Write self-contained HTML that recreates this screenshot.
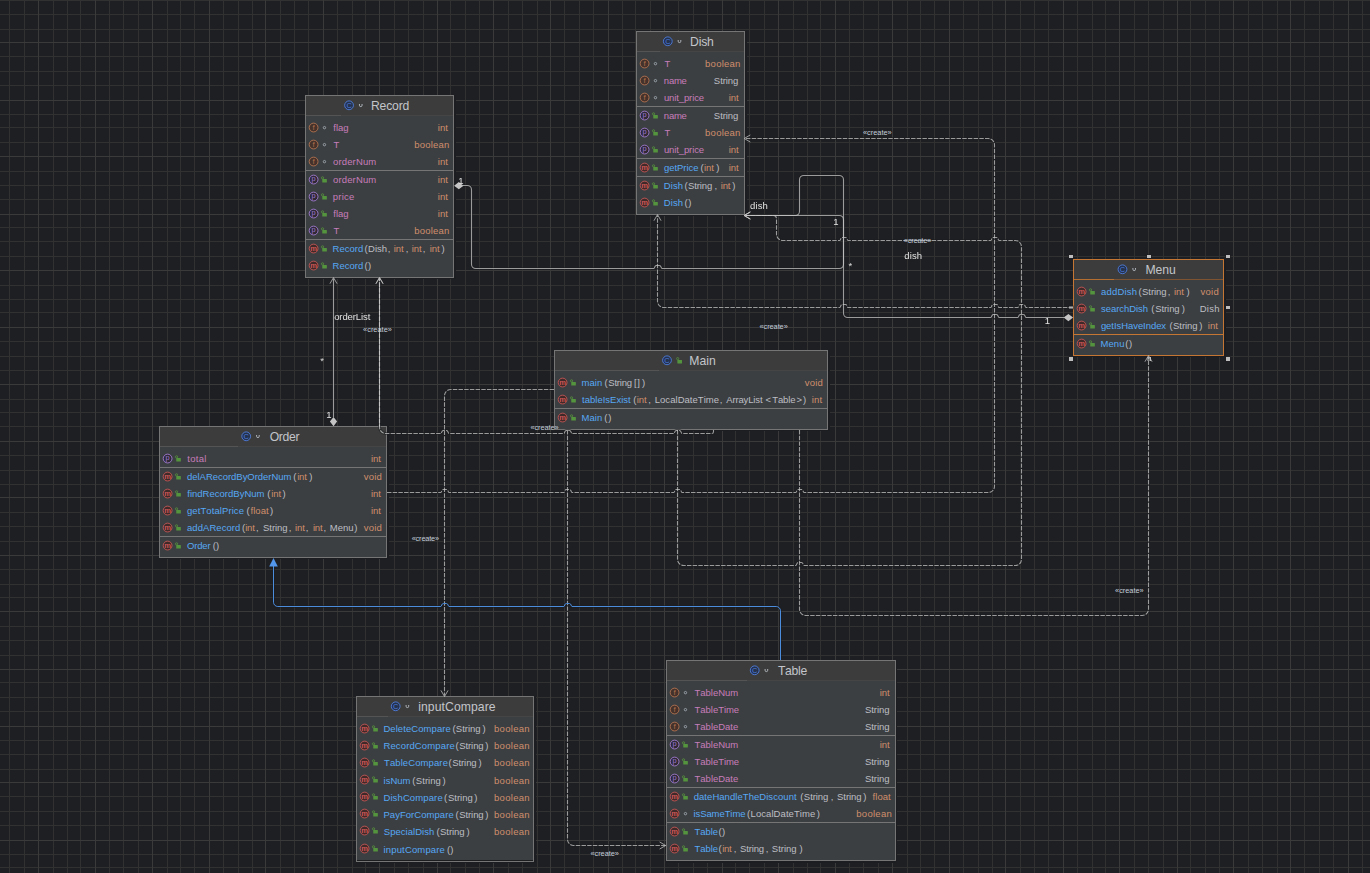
<!DOCTYPE html>
<html lang="en"><head><meta charset="utf-8"><title>UML class diagram</title>
<style>
html,body{margin:0;padding:0;background:#1e1f22}
body{width:1370px;height:873px;position:relative;overflow:hidden;font-family:"Liberation Sans",sans-serif;font-kerning:none}
svg{position:absolute;left:0;top:0;overflow:visible}
svg text{font-family:"Liberation Sans",sans-serif}
.bx{position:absolute;box-sizing:border-box;border:1px solid #757575;background:#3c3f41;box-shadow:2px 2px 0 0 #1c1d20}
.bx.sel{border-color:#c57633}
.bx i{position:absolute;left:0;right:0;display:block}
.hd{top:0;background:#3c3c3c}
.hs{height:1px;background:#454545}
.bx .hl{height:1px;right:auto;background:#545454}
.sel .hs{background:#7d5332}
.bx.sel .hl{background:#b36e30}
.sp{height:1px;background:#757575}
.hn{position:absolute;display:block;width:4px;height:3.8px;background:#bebebe;box-shadow:0 0 0 .5px #1e1f22}
span{position:absolute;white-space:pre;display:block}
.t{font-size:9.5px;line-height:12px}
.tt{font-size:12.2px;line-height:16px;color:#c3c5ca}
.lb{font-size:9.5px;line-height:12px;color:#e2e2e2}
.gl{position:absolute;left:0;top:0;width:1370px;height:873px;will-change:transform}
.cr{font-size:7.4px;line-height:10px;color:#c4cedb}
.p{color:#c77dbb}.b{color:#56a8f5}.o{color:#cf8e6d}.g{color:#bcbec4}
</style></head><body>
<svg width="1370" height="873" viewBox="0 0 1370 873" stroke-width="1" fill="none" shape-rendering="crispEdges"><path d="M9.5 0V873M24.5 0V873M53.5 0V873M67.5 0V873M80.5 0V873M109.5 0V873M123.5 0V873M138.5 0V873M167.5 0V873M180.5 0V873M194.5 0V873M223.5 0V873M238.5 0V873M252.5 0V873M280.5 0V873M294.5 0V873M308.5 0V873M337.5 0V873M352.5 0V873M365.5 0V873M394.5 0V873M408.5 0V873M423.5 0V873M450.5 0V873M465.5 0V873M479.5 0V873M508.5 0V873M522.5 0V873M537.5 0V873M564.5 0V873M579.5 0V873M593.5 0V873M622.5 0V873M635.5 0V873M650.5 0V873M678.5 0V873M693.5 0V873M707.5 0V873M735.5 0V873M749.5 0V873M764.5 0V873M793.5 0V873M807.5 0V873M820.5 0V873M849.5 0V873M863.5 0V873M878.5 0V873M907.5 0V873M920.5 0V873M934.5 0V873M963.5 0V873M978.5 0V873M992.5 0V873M1020.5 0V873M1034.5 0V873M1048.5 0V873M1077.5 0V873M1092.5 0V873M1105.5 0V873M1134.5 0V873M1148.5 0V873M1163.5 0V873M1190.5 0V873M1205.5 0V873M1219.5 0V873M1248.5 0V873M1262.5 0V873M1277.5 0V873M1304.5 0V873M1319.5 0V873M1333.5 0V873M1362.5 0V873M0 0.5H1370M0 14.5H1370M0 29.5H1370M0 56.5H1370M0 71.5H1370M0 85.5H1370M0 114.5H1370M0 127.5H1370M0 142.5H1370M0 171.5H1370M0 185.5H1370M0 199.5H1370M0 227.5H1370M0 241.5H1370M0 256.5H1370M0 285.5H1370M0 299.5H1370M0 312.5H1370M0 341.5H1370M0 356.5H1370M0 370.5H1370M0 399.5H1370M0 412.5H1370M0 426.5H1370M0 455.5H1370M0 470.5H1370M0 484.5H1370M0 512.5H1370M0 526.5H1370M0 541.5H1370M0 569.5H1370M0 584.5H1370M0 597.5H1370M0 626.5H1370M0 640.5H1370M0 655.5H1370M0 682.5H1370M0 697.5H1370M0 711.5H1370M0 740.5H1370M0 754.5H1370M0 769.5H1370M0 796.5H1370M0 811.5H1370M0 825.5H1370M0 854.5H1370M0 867.5H1370" stroke="#313132"/><path d="M38.5 0V873M95.5 0V873M152.5 0V873M209.5 0V873M265.5 0V873M323.5 0V873M379.5 0V873M437.5 0V873M493.5 0V873M550.5 0V873M608.5 0V873M664.5 0V873M722.5 0V873M778.5 0V873M835.5 0V873M892.5 0V873M949.5 0V873M1005.5 0V873M1063.5 0V873M1119.5 0V873M1177.5 0V873M1233.5 0V873M1290.5 0V873M1348.5 0V873M0 42.5H1370M0 100.5H1370M0 156.5H1370M0 214.5H1370M0 270.5H1370M0 327.5H1370M0 384.5H1370M0 441.5H1370M0 497.5H1370M0 555.5H1370M0 611.5H1370M0 669.5H1370M0 726.5H1370M0 782.5H1370M0 840.5H1370" stroke="#3a3a3b"/></svg>
<div class="bx" style="left:305px;top:95px;width:149px;height:183px;box-shadow:2px 0 0 0 #1c1d20,0 1px 0 0 #1c1d20,2px 1px 0 0 #1c1d20"><i class="hd" style="height:19px"></i><i class="hs" style="top:19px"></i><i class="hl" style="top:19px;width:35px"></i><i class="sp" style="top:74px"></i><i class="sp" style="top:143px"></i></div>
<div class="bx" style="left:636px;top:31px;width:109px;height:184px;box-shadow:2px 0 0 0 #1c1d20,0 1px 0 0 #1c1d20,2px 1px 0 0 #1c1d20"><i class="hd" style="height:19px"></i><i class="hs" style="top:19px"></i><i class="hl" style="top:19px;width:23px"></i><i class="sp" style="top:74px"></i><i class="sp" style="top:126px"></i><i class="sp" style="top:144px"></i></div>
<div class="bx sel" style="left:1073px;top:259px;width:151px;height:97px;box-shadow:2px 0 0 0 #1c1d20,0 1px 0 0 #1c1d20,2px 1px 0 0 #1c1d20"><i class="hd" style="height:19px"></i><i class="hs" style="top:19px"></i><i class="hl" style="top:19px;width:40px"></i><i class="sp" style="top:74px;background:#c57633"></i></div>
<i class="hn" style="left:1069px;top:254.5px"></i>
<i class="hn" style="left:1069px;top:305.7px"></i>
<i class="hn" style="left:1069px;top:357px"></i>
<i class="hn" style="left:1147.4px;top:254.5px"></i>
<i class="hn" style="left:1147.4px;top:357px"></i>
<i class="hn" style="left:1225.7px;top:254.5px"></i>
<i class="hn" style="left:1225.7px;top:305.7px"></i>
<i class="hn" style="left:1225.7px;top:357px"></i>
<div class="bx" style="left:554px;top:350px;width:274px;height:80px;box-shadow:2px 0 0 0 #1c1d20,0 1px 0 0 #1c1d20,2px 1px 0 0 #1c1d20"><i class="hd" style="height:19px"></i><i class="hs" style="top:19px"></i><i class="hl" style="top:19px;width:104px"></i><i class="sp" style="top:57px"></i></div>
<div class="bx" style="left:159px;top:426px;width:228px;height:132px;box-shadow:2px 0 0 0 #1c1d20,0 1px 0 0 #1c1d20,2px 1px 0 0 #1c1d20"><i class="hd" style="height:19px"></i><i class="hs" style="top:19px"></i><i class="hl" style="top:19px;width:78px"></i><i class="sp" style="top:40px"></i><i class="sp" style="top:109px"></i></div>
<div class="bx" style="left:356px;top:696px;width:178px;height:166px;box-shadow:2px 0 0 0 #1c1d20,0 1px 0 0 #1c1d20,2px 1px 0 0 #1c1d20"><i class="hd" style="height:19px"></i><i class="hs" style="top:19px"></i><i class="hl" style="top:19px;width:31px"></i><i class="sp" style="top:163px;background:#1c1d1f"></i></div>
<div class="bx" style="left:666px;top:660px;width:230px;height:201px;box-shadow:1px 0 0 0 #1c1d20,0 2px 0 0 #1c1d20,1px 2px 0 0 #1c1d20"><i class="hd" style="height:19px"></i><i class="hs" style="top:19px"></i><i class="hl" style="top:19px;width:80px"></i><i class="sp" style="top:74px"></i><i class="sp" style="top:126px"></i><i class="sp" style="top:161px"></i></div>
<svg width="1370" height="873" viewBox="0 0 1370 873"><g transform="translate(313.6 127.55)"><circle r="4.4" fill="#45322b" stroke="#c77d55" stroke-width="0.85" stroke-opacity="0.9"/><text y="2.5" font-size="7.8" text-anchor="middle" fill="#c77d55" fill-opacity="0.85">f</text></g><circle cx="324.45" cy="127.65" r="1.2" fill="none" stroke="#9ea7b0" stroke-width="0.9"/><g transform="translate(313.6 144.55)"><circle r="4.4" fill="#45322b" stroke="#c77d55" stroke-width="0.85" stroke-opacity="0.9"/><text y="2.5" font-size="7.8" text-anchor="middle" fill="#c77d55" fill-opacity="0.85">f</text></g><circle cx="324.45" cy="144.65" r="1.2" fill="none" stroke="#9ea7b0" stroke-width="0.9"/><g transform="translate(313.6 161.55)"><circle r="4.4" fill="#45322b" stroke="#c77d55" stroke-width="0.85" stroke-opacity="0.9"/><text y="2.5" font-size="7.8" text-anchor="middle" fill="#c77d55" fill-opacity="0.85">f</text></g><circle cx="324.45" cy="161.65" r="1.2" fill="none" stroke="#9ea7b0" stroke-width="0.9"/><g transform="translate(313.6 179.55)"><circle r="4.4" fill="#2f2936" stroke="#b589ec" stroke-width="0.85" stroke-opacity="0.9"/><text y="1.7" font-size="7.4" text-anchor="middle" fill="#b589ec" fill-opacity="0.85">p</text></g><g transform="translate(323.95 179.7)"><rect x="-1.7" y="-0.6" width="4.6" height="3.5" rx="0.3" fill="#55943e"/><circle cx="-1.4" cy="-1.85" r="1.1" fill="none" stroke="#55943e" stroke-width="0.8"/></g><g transform="translate(313.6 196.55)"><circle r="4.4" fill="#2f2936" stroke="#b589ec" stroke-width="0.85" stroke-opacity="0.9"/><text y="1.7" font-size="7.4" text-anchor="middle" fill="#b589ec" fill-opacity="0.85">p</text></g><g transform="translate(323.95 196.7)"><rect x="-1.7" y="-0.6" width="4.6" height="3.5" rx="0.3" fill="#55943e"/><circle cx="-1.4" cy="-1.85" r="1.1" fill="none" stroke="#55943e" stroke-width="0.8"/></g><g transform="translate(313.6 213.55)"><circle r="4.4" fill="#2f2936" stroke="#b589ec" stroke-width="0.85" stroke-opacity="0.9"/><text y="1.7" font-size="7.4" text-anchor="middle" fill="#b589ec" fill-opacity="0.85">p</text></g><g transform="translate(323.95 213.7)"><rect x="-1.7" y="-0.6" width="4.6" height="3.5" rx="0.3" fill="#55943e"/><circle cx="-1.4" cy="-1.85" r="1.1" fill="none" stroke="#55943e" stroke-width="0.8"/></g><g transform="translate(313.6 230.55)"><circle r="4.4" fill="#2f2936" stroke="#b589ec" stroke-width="0.85" stroke-opacity="0.9"/><text y="1.7" font-size="7.4" text-anchor="middle" fill="#b589ec" fill-opacity="0.85">p</text></g><g transform="translate(323.95 230.7)"><rect x="-1.7" y="-0.6" width="4.6" height="3.5" rx="0.3" fill="#55943e"/><circle cx="-1.4" cy="-1.85" r="1.1" fill="none" stroke="#55943e" stroke-width="0.8"/></g><g transform="translate(313.6 248.55)"><circle r="4.4" fill="#402929" stroke="#db5c5c" stroke-width="0.85" stroke-opacity="0.9"/><text y="2.0" font-size="7.6" text-anchor="middle" fill="#db5c5c" font-weight="bold" fill-opacity="0.9">m</text></g><g transform="translate(323.95 248.7)"><rect x="-1.7" y="-0.6" width="4.6" height="3.5" rx="0.3" fill="#55943e"/><circle cx="-1.4" cy="-1.85" r="1.1" fill="none" stroke="#55943e" stroke-width="0.8"/></g><g transform="translate(313.6 265.55)"><circle r="4.4" fill="#402929" stroke="#db5c5c" stroke-width="0.85" stroke-opacity="0.9"/><text y="2.0" font-size="7.6" text-anchor="middle" fill="#db5c5c" font-weight="bold" fill-opacity="0.9">m</text></g><g transform="translate(323.95 265.7)"><rect x="-1.7" y="-0.6" width="4.6" height="3.5" rx="0.3" fill="#55943e"/><circle cx="-1.4" cy="-1.85" r="1.1" fill="none" stroke="#55943e" stroke-width="0.8"/></g><g transform="translate(349.05 105.3)"><circle r="4.4" fill="#25324d" stroke="#548af7" stroke-width="0.85" stroke-opacity="0.9"/><text y="2.45" font-size="7.4" text-anchor="middle" fill="#548af7" fill-opacity="0.85">C</text></g><path transform="translate(360.75 105.2)" d="M-1.3 -1.2V0.1A1.3 1.3 0 0 0 1.3 0.1V-1.2" fill="none" stroke="#b4bac1" stroke-width="0.95"/><g transform="translate(644.6 63.55)"><circle r="4.4" fill="#45322b" stroke="#c77d55" stroke-width="0.85" stroke-opacity="0.9"/><text y="2.5" font-size="7.8" text-anchor="middle" fill="#c77d55" fill-opacity="0.85">f</text></g><circle cx="655.45" cy="63.65" r="1.2" fill="none" stroke="#9ea7b0" stroke-width="0.9"/><g transform="translate(644.6 80.55)"><circle r="4.4" fill="#45322b" stroke="#c77d55" stroke-width="0.85" stroke-opacity="0.9"/><text y="2.5" font-size="7.8" text-anchor="middle" fill="#c77d55" fill-opacity="0.85">f</text></g><circle cx="655.45" cy="80.65" r="1.2" fill="none" stroke="#9ea7b0" stroke-width="0.9"/><g transform="translate(644.6 97.55)"><circle r="4.4" fill="#45322b" stroke="#c77d55" stroke-width="0.85" stroke-opacity="0.9"/><text y="2.5" font-size="7.8" text-anchor="middle" fill="#c77d55" fill-opacity="0.85">f</text></g><circle cx="655.45" cy="97.65" r="1.2" fill="none" stroke="#9ea7b0" stroke-width="0.9"/><g transform="translate(644.6 115.55)"><circle r="4.4" fill="#2f2936" stroke="#b589ec" stroke-width="0.85" stroke-opacity="0.9"/><text y="1.7" font-size="7.4" text-anchor="middle" fill="#b589ec" fill-opacity="0.85">p</text></g><g transform="translate(654.95 115.7)"><rect x="-1.7" y="-0.6" width="4.6" height="3.5" rx="0.3" fill="#55943e"/><circle cx="-1.4" cy="-1.85" r="1.1" fill="none" stroke="#55943e" stroke-width="0.8"/></g><g transform="translate(644.6 132.55)"><circle r="4.4" fill="#2f2936" stroke="#b589ec" stroke-width="0.85" stroke-opacity="0.9"/><text y="1.7" font-size="7.4" text-anchor="middle" fill="#b589ec" fill-opacity="0.85">p</text></g><g transform="translate(654.95 132.7)"><rect x="-1.7" y="-0.6" width="4.6" height="3.5" rx="0.3" fill="#55943e"/><circle cx="-1.4" cy="-1.85" r="1.1" fill="none" stroke="#55943e" stroke-width="0.8"/></g><g transform="translate(644.6 149.55)"><circle r="4.4" fill="#2f2936" stroke="#b589ec" stroke-width="0.85" stroke-opacity="0.9"/><text y="1.7" font-size="7.4" text-anchor="middle" fill="#b589ec" fill-opacity="0.85">p</text></g><g transform="translate(654.95 149.7)"><rect x="-1.7" y="-0.6" width="4.6" height="3.5" rx="0.3" fill="#55943e"/><circle cx="-1.4" cy="-1.85" r="1.1" fill="none" stroke="#55943e" stroke-width="0.8"/></g><g transform="translate(644.6 167.55)"><circle r="4.4" fill="#402929" stroke="#db5c5c" stroke-width="0.85" stroke-opacity="0.9"/><text y="2.0" font-size="7.6" text-anchor="middle" fill="#db5c5c" font-weight="bold" fill-opacity="0.9">m</text></g><g transform="translate(654.95 167.7)"><rect x="-1.7" y="-0.6" width="4.6" height="3.5" rx="0.3" fill="#55943e"/><circle cx="-1.4" cy="-1.85" r="1.1" fill="none" stroke="#55943e" stroke-width="0.8"/></g><g transform="translate(644.6 185.55)"><circle r="4.4" fill="#402929" stroke="#db5c5c" stroke-width="0.85" stroke-opacity="0.9"/><text y="2.0" font-size="7.6" text-anchor="middle" fill="#db5c5c" font-weight="bold" fill-opacity="0.9">m</text></g><g transform="translate(654.95 185.7)"><rect x="-1.7" y="-0.6" width="4.6" height="3.5" rx="0.3" fill="#55943e"/><circle cx="-1.4" cy="-1.85" r="1.1" fill="none" stroke="#55943e" stroke-width="0.8"/></g><g transform="translate(644.6 202.55)"><circle r="4.4" fill="#402929" stroke="#db5c5c" stroke-width="0.85" stroke-opacity="0.9"/><text y="2.0" font-size="7.6" text-anchor="middle" fill="#db5c5c" font-weight="bold" fill-opacity="0.9">m</text></g><g transform="translate(654.95 202.7)"><rect x="-1.7" y="-0.6" width="4.6" height="3.5" rx="0.3" fill="#55943e"/><circle cx="-1.4" cy="-1.85" r="1.1" fill="none" stroke="#55943e" stroke-width="0.8"/></g><g transform="translate(667.8 41.3)"><circle r="4.4" fill="#25324d" stroke="#548af7" stroke-width="0.85" stroke-opacity="0.9"/><text y="2.45" font-size="7.4" text-anchor="middle" fill="#548af7" fill-opacity="0.85">C</text></g><path transform="translate(679.5 41.2)" d="M-1.3 -1.2V0.1A1.3 1.3 0 0 0 1.3 0.1V-1.2" fill="none" stroke="#b4bac1" stroke-width="0.95"/><g transform="translate(1081.6 291.55)"><circle r="4.4" fill="#402929" stroke="#db5c5c" stroke-width="0.85" stroke-opacity="0.9"/><text y="2.0" font-size="7.6" text-anchor="middle" fill="#db5c5c" font-weight="bold" fill-opacity="0.9">m</text></g><g transform="translate(1091.95 291.7)"><rect x="-1.7" y="-0.6" width="4.6" height="3.5" rx="0.3" fill="#55943e"/><circle cx="-1.4" cy="-1.85" r="1.1" fill="none" stroke="#55943e" stroke-width="0.8"/></g><g transform="translate(1081.6 308.55)"><circle r="4.4" fill="#402929" stroke="#db5c5c" stroke-width="0.85" stroke-opacity="0.9"/><text y="2.0" font-size="7.6" text-anchor="middle" fill="#db5c5c" font-weight="bold" fill-opacity="0.9">m</text></g><g transform="translate(1091.95 308.7)"><rect x="-1.7" y="-0.6" width="4.6" height="3.5" rx="0.3" fill="#55943e"/><circle cx="-1.4" cy="-1.85" r="1.1" fill="none" stroke="#55943e" stroke-width="0.8"/></g><g transform="translate(1081.6 325.55)"><circle r="4.4" fill="#402929" stroke="#db5c5c" stroke-width="0.85" stroke-opacity="0.9"/><text y="2.0" font-size="7.6" text-anchor="middle" fill="#db5c5c" font-weight="bold" fill-opacity="0.9">m</text></g><g transform="translate(1091.95 325.7)"><rect x="-1.7" y="-0.6" width="4.6" height="3.5" rx="0.3" fill="#55943e"/><circle cx="-1.4" cy="-1.85" r="1.1" fill="none" stroke="#55943e" stroke-width="0.8"/></g><g transform="translate(1081.6 343.55)"><circle r="4.4" fill="#402929" stroke="#db5c5c" stroke-width="0.85" stroke-opacity="0.9"/><text y="2.0" font-size="7.6" text-anchor="middle" fill="#db5c5c" font-weight="bold" fill-opacity="0.9">m</text></g><g transform="translate(1091.95 343.7)"><rect x="-1.7" y="-0.6" width="4.6" height="3.5" rx="0.3" fill="#55943e"/><circle cx="-1.4" cy="-1.85" r="1.1" fill="none" stroke="#55943e" stroke-width="0.8"/></g><g transform="translate(1122.5 269.3)"><circle r="4.4" fill="#25324d" stroke="#548af7" stroke-width="0.85" stroke-opacity="0.9"/><text y="2.45" font-size="7.4" text-anchor="middle" fill="#548af7" fill-opacity="0.85">C</text></g><path transform="translate(1134.2 269.2)" d="M-1.3 -1.2V0.1A1.3 1.3 0 0 0 1.3 0.1V-1.2" fill="none" stroke="#b4bac1" stroke-width="0.95"/><g transform="translate(562.6 382.55)"><circle r="4.4" fill="#402929" stroke="#db5c5c" stroke-width="0.85" stroke-opacity="0.9"/><text y="2.0" font-size="7.6" text-anchor="middle" fill="#db5c5c" font-weight="bold" fill-opacity="0.9">m</text></g><g transform="translate(572.95 382.7)"><rect x="-1.7" y="-0.6" width="4.6" height="3.5" rx="0.3" fill="#55943e"/><circle cx="-1.4" cy="-1.85" r="1.1" fill="none" stroke="#55943e" stroke-width="0.8"/></g><g transform="translate(562.6 399.55)"><circle r="4.4" fill="#402929" stroke="#db5c5c" stroke-width="0.85" stroke-opacity="0.9"/><text y="2.0" font-size="7.6" text-anchor="middle" fill="#db5c5c" font-weight="bold" fill-opacity="0.9">m</text></g><g transform="translate(572.95 399.7)"><rect x="-1.7" y="-0.6" width="4.6" height="3.5" rx="0.3" fill="#55943e"/><circle cx="-1.4" cy="-1.85" r="1.1" fill="none" stroke="#55943e" stroke-width="0.8"/></g><g transform="translate(562.6 417.55)"><circle r="4.4" fill="#402929" stroke="#db5c5c" stroke-width="0.85" stroke-opacity="0.9"/><text y="2.0" font-size="7.6" text-anchor="middle" fill="#db5c5c" font-weight="bold" fill-opacity="0.9">m</text></g><g transform="translate(572.95 417.7)"><rect x="-1.7" y="-0.6" width="4.6" height="3.5" rx="0.3" fill="#55943e"/><circle cx="-1.4" cy="-1.85" r="1.1" fill="none" stroke="#55943e" stroke-width="0.8"/></g><g transform="translate(667 360.3)"><circle r="4.4" fill="#25324d" stroke="#548af7" stroke-width="0.85" stroke-opacity="0.9"/><text y="2.45" font-size="7.4" text-anchor="middle" fill="#548af7" fill-opacity="0.85">C</text></g><g transform="translate(679.1 360.5)"><rect x="-1.7" y="-0.6" width="4.6" height="3.5" rx="0.3" fill="#55943e"/><circle cx="-1.4" cy="-1.85" r="1.1" fill="none" stroke="#55943e" stroke-width="0.8"/></g><g transform="translate(167.6 458.55)"><circle r="4.4" fill="#2f2936" stroke="#b589ec" stroke-width="0.85" stroke-opacity="0.9"/><text y="1.7" font-size="7.4" text-anchor="middle" fill="#b589ec" fill-opacity="0.85">p</text></g><g transform="translate(177.95 458.7)"><rect x="-1.7" y="-0.6" width="4.6" height="3.5" rx="0.3" fill="#55943e"/><circle cx="-1.4" cy="-1.85" r="1.1" fill="none" stroke="#55943e" stroke-width="0.8"/></g><g transform="translate(167.6 476.55)"><circle r="4.4" fill="#402929" stroke="#db5c5c" stroke-width="0.85" stroke-opacity="0.9"/><text y="2.0" font-size="7.6" text-anchor="middle" fill="#db5c5c" font-weight="bold" fill-opacity="0.9">m</text></g><g transform="translate(177.95 476.7)"><rect x="-1.7" y="-0.6" width="4.6" height="3.5" rx="0.3" fill="#55943e"/><circle cx="-1.4" cy="-1.85" r="1.1" fill="none" stroke="#55943e" stroke-width="0.8"/></g><g transform="translate(167.6 493.55)"><circle r="4.4" fill="#402929" stroke="#db5c5c" stroke-width="0.85" stroke-opacity="0.9"/><text y="2.0" font-size="7.6" text-anchor="middle" fill="#db5c5c" font-weight="bold" fill-opacity="0.9">m</text></g><g transform="translate(177.95 493.7)"><rect x="-1.7" y="-0.6" width="4.6" height="3.5" rx="0.3" fill="#55943e"/><circle cx="-1.4" cy="-1.85" r="1.1" fill="none" stroke="#55943e" stroke-width="0.8"/></g><g transform="translate(167.6 510.55)"><circle r="4.4" fill="#402929" stroke="#db5c5c" stroke-width="0.85" stroke-opacity="0.9"/><text y="2.0" font-size="7.6" text-anchor="middle" fill="#db5c5c" font-weight="bold" fill-opacity="0.9">m</text></g><g transform="translate(177.95 510.7)"><rect x="-1.7" y="-0.6" width="4.6" height="3.5" rx="0.3" fill="#55943e"/><circle cx="-1.4" cy="-1.85" r="1.1" fill="none" stroke="#55943e" stroke-width="0.8"/></g><g transform="translate(167.6 527.55)"><circle r="4.4" fill="#402929" stroke="#db5c5c" stroke-width="0.85" stroke-opacity="0.9"/><text y="2.0" font-size="7.6" text-anchor="middle" fill="#db5c5c" font-weight="bold" fill-opacity="0.9">m</text></g><g transform="translate(177.95 527.7)"><rect x="-1.7" y="-0.6" width="4.6" height="3.5" rx="0.3" fill="#55943e"/><circle cx="-1.4" cy="-1.85" r="1.1" fill="none" stroke="#55943e" stroke-width="0.8"/></g><g transform="translate(167.6 545.55)"><circle r="4.4" fill="#402929" stroke="#db5c5c" stroke-width="0.85" stroke-opacity="0.9"/><text y="2.0" font-size="7.6" text-anchor="middle" fill="#db5c5c" font-weight="bold" fill-opacity="0.9">m</text></g><g transform="translate(177.95 545.7)"><rect x="-1.7" y="-0.6" width="4.6" height="3.5" rx="0.3" fill="#55943e"/><circle cx="-1.4" cy="-1.85" r="1.1" fill="none" stroke="#55943e" stroke-width="0.8"/></g><g transform="translate(246.2 436.3)"><circle r="4.4" fill="#25324d" stroke="#548af7" stroke-width="0.85" stroke-opacity="0.9"/><text y="2.45" font-size="7.4" text-anchor="middle" fill="#548af7" fill-opacity="0.85">C</text></g><path transform="translate(257.9 436.2)" d="M-1.3 -1.2V0.1A1.3 1.3 0 0 0 1.3 0.1V-1.2" fill="none" stroke="#b4bac1" stroke-width="0.95"/><g transform="translate(364.6 728.55)"><circle r="4.4" fill="#402929" stroke="#db5c5c" stroke-width="0.85" stroke-opacity="0.9"/><text y="2.0" font-size="7.6" text-anchor="middle" fill="#db5c5c" font-weight="bold" fill-opacity="0.9">m</text></g><g transform="translate(374.95 728.7)"><rect x="-1.7" y="-0.6" width="4.6" height="3.5" rx="0.3" fill="#55943e"/><circle cx="-1.4" cy="-1.85" r="1.1" fill="none" stroke="#55943e" stroke-width="0.8"/></g><g transform="translate(364.6 745.55)"><circle r="4.4" fill="#402929" stroke="#db5c5c" stroke-width="0.85" stroke-opacity="0.9"/><text y="2.0" font-size="7.6" text-anchor="middle" fill="#db5c5c" font-weight="bold" fill-opacity="0.9">m</text></g><g transform="translate(374.95 745.7)"><rect x="-1.7" y="-0.6" width="4.6" height="3.5" rx="0.3" fill="#55943e"/><circle cx="-1.4" cy="-1.85" r="1.1" fill="none" stroke="#55943e" stroke-width="0.8"/></g><g transform="translate(364.6 762.55)"><circle r="4.4" fill="#402929" stroke="#db5c5c" stroke-width="0.85" stroke-opacity="0.9"/><text y="2.0" font-size="7.6" text-anchor="middle" fill="#db5c5c" font-weight="bold" fill-opacity="0.9">m</text></g><g transform="translate(374.95 762.7)"><rect x="-1.7" y="-0.6" width="4.6" height="3.5" rx="0.3" fill="#55943e"/><circle cx="-1.4" cy="-1.85" r="1.1" fill="none" stroke="#55943e" stroke-width="0.8"/></g><g transform="translate(364.6 779.55)"><circle r="4.4" fill="#402929" stroke="#db5c5c" stroke-width="0.85" stroke-opacity="0.9"/><text y="2.0" font-size="7.6" text-anchor="middle" fill="#db5c5c" font-weight="bold" fill-opacity="0.9">m</text></g><g transform="translate(374.95 779.7)"><rect x="-1.7" y="-0.6" width="4.6" height="3.5" rx="0.3" fill="#55943e"/><circle cx="-1.4" cy="-1.85" r="1.1" fill="none" stroke="#55943e" stroke-width="0.8"/></g><g transform="translate(364.6 796.55)"><circle r="4.4" fill="#402929" stroke="#db5c5c" stroke-width="0.85" stroke-opacity="0.9"/><text y="2.0" font-size="7.6" text-anchor="middle" fill="#db5c5c" font-weight="bold" fill-opacity="0.9">m</text></g><g transform="translate(374.95 796.7)"><rect x="-1.7" y="-0.6" width="4.6" height="3.5" rx="0.3" fill="#55943e"/><circle cx="-1.4" cy="-1.85" r="1.1" fill="none" stroke="#55943e" stroke-width="0.8"/></g><g transform="translate(364.6 813.55)"><circle r="4.4" fill="#402929" stroke="#db5c5c" stroke-width="0.85" stroke-opacity="0.9"/><text y="2.0" font-size="7.6" text-anchor="middle" fill="#db5c5c" font-weight="bold" fill-opacity="0.9">m</text></g><g transform="translate(374.95 813.7)"><rect x="-1.7" y="-0.6" width="4.6" height="3.5" rx="0.3" fill="#55943e"/><circle cx="-1.4" cy="-1.85" r="1.1" fill="none" stroke="#55943e" stroke-width="0.8"/></g><g transform="translate(364.6 830.55)"><circle r="4.4" fill="#402929" stroke="#db5c5c" stroke-width="0.85" stroke-opacity="0.9"/><text y="2.0" font-size="7.6" text-anchor="middle" fill="#db5c5c" font-weight="bold" fill-opacity="0.9">m</text></g><g transform="translate(374.95 830.7)"><rect x="-1.7" y="-0.6" width="4.6" height="3.5" rx="0.3" fill="#55943e"/><circle cx="-1.4" cy="-1.85" r="1.1" fill="none" stroke="#55943e" stroke-width="0.8"/></g><g transform="translate(364.6 848.55)"><circle r="4.4" fill="#402929" stroke="#db5c5c" stroke-width="0.85" stroke-opacity="0.9"/><text y="2.0" font-size="7.6" text-anchor="middle" fill="#db5c5c" font-weight="bold" fill-opacity="0.9">m</text></g><g transform="translate(374.95 848.7)"><rect x="-1.7" y="-0.6" width="4.6" height="3.5" rx="0.3" fill="#55943e"/><circle cx="-1.4" cy="-1.85" r="1.1" fill="none" stroke="#55943e" stroke-width="0.8"/></g><g transform="translate(395.7 706.3)"><circle r="4.4" fill="#25324d" stroke="#548af7" stroke-width="0.85" stroke-opacity="0.9"/><text y="2.45" font-size="7.4" text-anchor="middle" fill="#548af7" fill-opacity="0.85">C</text></g><path transform="translate(407.4 706.2)" d="M-1.3 -1.2V0.1A1.3 1.3 0 0 0 1.3 0.1V-1.2" fill="none" stroke="#b4bac1" stroke-width="0.95"/><g transform="translate(674.6 692.55)"><circle r="4.4" fill="#45322b" stroke="#c77d55" stroke-width="0.85" stroke-opacity="0.9"/><text y="2.5" font-size="7.8" text-anchor="middle" fill="#c77d55" fill-opacity="0.85">f</text></g><circle cx="685.45" cy="692.65" r="1.2" fill="none" stroke="#9ea7b0" stroke-width="0.9"/><g transform="translate(674.6 709.55)"><circle r="4.4" fill="#45322b" stroke="#c77d55" stroke-width="0.85" stroke-opacity="0.9"/><text y="2.5" font-size="7.8" text-anchor="middle" fill="#c77d55" fill-opacity="0.85">f</text></g><circle cx="685.45" cy="709.65" r="1.2" fill="none" stroke="#9ea7b0" stroke-width="0.9"/><g transform="translate(674.6 726.55)"><circle r="4.4" fill="#45322b" stroke="#c77d55" stroke-width="0.85" stroke-opacity="0.9"/><text y="2.5" font-size="7.8" text-anchor="middle" fill="#c77d55" fill-opacity="0.85">f</text></g><circle cx="685.45" cy="726.65" r="1.2" fill="none" stroke="#9ea7b0" stroke-width="0.9"/><g transform="translate(674.6 744.55)"><circle r="4.4" fill="#2f2936" stroke="#b589ec" stroke-width="0.85" stroke-opacity="0.9"/><text y="1.7" font-size="7.4" text-anchor="middle" fill="#b589ec" fill-opacity="0.85">p</text></g><g transform="translate(684.95 744.7)"><rect x="-1.7" y="-0.6" width="4.6" height="3.5" rx="0.3" fill="#55943e"/><circle cx="-1.4" cy="-1.85" r="1.1" fill="none" stroke="#55943e" stroke-width="0.8"/></g><g transform="translate(674.6 761.55)"><circle r="4.4" fill="#2f2936" stroke="#b589ec" stroke-width="0.85" stroke-opacity="0.9"/><text y="1.7" font-size="7.4" text-anchor="middle" fill="#b589ec" fill-opacity="0.85">p</text></g><g transform="translate(684.95 761.7)"><rect x="-1.7" y="-0.6" width="4.6" height="3.5" rx="0.3" fill="#55943e"/><circle cx="-1.4" cy="-1.85" r="1.1" fill="none" stroke="#55943e" stroke-width="0.8"/></g><g transform="translate(674.6 778.55)"><circle r="4.4" fill="#2f2936" stroke="#b589ec" stroke-width="0.85" stroke-opacity="0.9"/><text y="1.7" font-size="7.4" text-anchor="middle" fill="#b589ec" fill-opacity="0.85">p</text></g><g transform="translate(684.95 778.7)"><rect x="-1.7" y="-0.6" width="4.6" height="3.5" rx="0.3" fill="#55943e"/><circle cx="-1.4" cy="-1.85" r="1.1" fill="none" stroke="#55943e" stroke-width="0.8"/></g><g transform="translate(674.6 796.55)"><circle r="4.4" fill="#402929" stroke="#db5c5c" stroke-width="0.85" stroke-opacity="0.9"/><text y="2.0" font-size="7.6" text-anchor="middle" fill="#db5c5c" font-weight="bold" fill-opacity="0.9">m</text></g><g transform="translate(684.95 796.7)"><rect x="-1.7" y="-0.6" width="4.6" height="3.5" rx="0.3" fill="#55943e"/><circle cx="-1.4" cy="-1.85" r="1.1" fill="none" stroke="#55943e" stroke-width="0.8"/></g><g transform="translate(674.6 813.55)"><circle r="4.4" fill="#402929" stroke="#db5c5c" stroke-width="0.85" stroke-opacity="0.9"/><text y="2.0" font-size="7.6" text-anchor="middle" fill="#db5c5c" font-weight="bold" fill-opacity="0.9">m</text></g><circle cx="685.45" cy="813.65" r="1.2" fill="none" stroke="#9ea7b0" stroke-width="0.9"/><g transform="translate(674.6 831.55)"><circle r="4.4" fill="#402929" stroke="#db5c5c" stroke-width="0.85" stroke-opacity="0.9"/><text y="2.0" font-size="7.6" text-anchor="middle" fill="#db5c5c" font-weight="bold" fill-opacity="0.9">m</text></g><g transform="translate(684.95 831.7)"><rect x="-1.7" y="-0.6" width="4.6" height="3.5" rx="0.3" fill="#55943e"/><circle cx="-1.4" cy="-1.85" r="1.1" fill="none" stroke="#55943e" stroke-width="0.8"/></g><g transform="translate(674.6 848.55)"><circle r="4.4" fill="#402929" stroke="#db5c5c" stroke-width="0.85" stroke-opacity="0.9"/><text y="2.0" font-size="7.6" text-anchor="middle" fill="#db5c5c" font-weight="bold" fill-opacity="0.9">m</text></g><g transform="translate(684.95 848.7)"><rect x="-1.7" y="-0.6" width="4.6" height="3.5" rx="0.3" fill="#55943e"/><circle cx="-1.4" cy="-1.85" r="1.1" fill="none" stroke="#55943e" stroke-width="0.8"/></g><g transform="translate(754.7 670.3)"><circle r="4.4" fill="#25324d" stroke="#548af7" stroke-width="0.85" stroke-opacity="0.9"/><text y="2.45" font-size="7.4" text-anchor="middle" fill="#548af7" fill-opacity="0.85">C</text></g><path transform="translate(766.4 670.2)" d="M-1.3 -1.2V0.1A1.3 1.3 0 0 0 1.3 0.1V-1.2" fill="none" stroke="#b4bac1" stroke-width="0.95"/></svg>
<svg width="1370" height="873" viewBox="0 0 1370 873" fill="none" stroke-width="1"><path d="M333.5 417.2L333.5 278.5M379.5 426L379.5 278.5M713.5 430L713.5 431.75C713.5 432.72 712.72 433.5 711.75 433.5L681.9 433.5C681.1 433.5 681.3 430.5 679.5 430.5L676.3 430.5C674.5 430.5 674.7 433.5 673.9 433.5L571.9 433.5C571.1 433.5 571.3 430.5 569.5 430.5L566.3 430.5C564.5 430.5 564.7 433.5 563.9 433.5L448.9 433.5C448.1 433.5 448.3 430.5 446.5 430.5L443.3 430.5C441.5 430.5 441.7 433.5 440.9 433.5L385.7 433.5C382.28 433.5 379.5 430.72 379.5 427.3L379.5 278.5M463 185.5L467.25 185.5C469.6 185.5 471.5 187.4 471.5 189.75L471.5 264.2C471.5 266.57 473.43 268.5 475.8 268.5L653.9 268.5C654.7 268.5 654.5 265.5 656.3 265.5L659.5 265.5C661.3 265.5 661.1 268.5 661.9 268.5L839.2 268.5C841.57 268.5 843.5 266.57 843.5 264.2L843.5 179.8C843.5 177.43 841.57 175.5 839.2 175.5L803.8 175.5C801.43 175.5 799.5 177.43 799.5 179.8L799.5 211.2C799.5 213.57 797.57 215.5 795.2 215.5L745.5 215.5M1064 317.5L1025.9 317.5C1025.1 317.5 1025.3 314.5 1023.5 314.5L1020.3 314.5C1018.5 314.5 1018.7 317.5 1017.9 317.5L998.9 317.5C998.1 317.5 998.3 314.5 996.5 314.5L993.3 314.5C991.5 314.5 991.7 317.5 990.9 317.5L847.8 317.5C845.43 317.5 843.5 315.57 843.5 313.2L843.5 219.8C843.5 217.43 841.57 215.5 839.2 215.5L745.5 215.5M387 492.5L440.9 492.5C441.7 492.5 441.5 489.5 443.3 489.5L446.5 489.5C448.3 489.5 448.1 492.5 448.9 492.5L563.9 492.5C564.7 492.5 564.5 489.5 566.3 489.5L569.5 489.5C571.3 489.5 571.1 492.5 571.9 492.5L673.9 492.5C674.7 492.5 674.5 489.5 676.3 489.5L679.5 489.5C681.3 489.5 681.1 492.5 681.9 492.5L795.9 492.5C796.7 492.5 796.5 489.5 798.3 489.5L801.5 489.5C803.3 489.5 803.1 492.5 803.9 492.5L988.3 492.5C991.72 492.5 994.5 489.72 994.5 486.3L994.5 144.7C994.5 141.28 991.72 138.5 988.3 138.5L745.5 138.5M677.5 430L677.5 559.3C677.5 562.72 680.28 565.5 683.7 565.5L795.9 565.5C796.7 565.5 796.5 562.5 798.3 562.5L801.5 562.5C803.3 562.5 803.1 565.5 803.9 565.5L1015.3 565.5C1018.72 565.5 1021.5 562.72 1021.5 559.3L1021.5 246.7C1021.5 243.28 1018.72 240.5 1015.3 240.5L998.9 240.5C998.1 240.5 998.3 237.5 996.5 237.5L993.3 237.5C991.5 237.5 991.7 240.5 990.9 240.5L847.9 240.5C847.1 240.5 847.3 237.5 845.5 237.5L842.3 237.5C840.5 237.5 840.7 240.5 839.9 240.5L782.7 240.5C779.28 240.5 776.5 237.72 776.5 234.3L776.5 218.7C776.5 216.93 775.07 215.5 773.3 215.5L745.5 215.5M1073 307.5L1025.9 307.5C1025.1 307.5 1025.3 304.5 1023.5 304.5L1020.3 304.5C1018.5 304.5 1018.7 307.5 1017.9 307.5L998.9 307.5C998.1 307.5 998.3 304.5 996.5 304.5L993.3 304.5C991.5 304.5 991.7 307.5 990.9 307.5L847.9 307.5C847.1 307.5 847.3 304.5 845.5 304.5L842.3 304.5C840.5 304.5 840.7 307.5 839.9 307.5L663.7 307.5C660.28 307.5 657.5 304.72 657.5 301.3L657.5 215.5M799.5 430L799.5 609.3C799.5 612.72 802.28 615.5 805.7 615.5L1142.3 615.5C1145.72 615.5 1148.5 612.72 1148.5 609.3L1148.5 356.5M554 389.5L450.7 389.5C447.28 389.5 444.5 392.28 444.5 395.7L444.5 695.5M567.5 430L567.5 839.3C567.5 842.72 570.28 845.5 573.7 845.5L665.5 845.5M780.5 660L780.5 610.8C780.5 608.43 778.57 606.5 776.2 606.5L571.9 606.5C571.1 606.5 571.3 603.5 569.5 603.5L566.3 603.5C564.5 603.5 564.7 606.5 563.9 606.5L448.9 606.5C448.1 606.5 448.3 603.5 446.5 603.5L443.3 603.5C441.5 603.5 441.7 606.5 440.9 606.5L277.8 606.5C275.43 606.5 273.5 604.57 273.5 602.2L273.5 566" stroke="#1a1b1e" stroke-width="3" stroke-opacity="0.5"/><g stroke="#c8c8c8" stroke-opacity="0.74" stroke-width="1.12"><path d="M333.5 417.2L333.5 278.5"/><path d="M379.5 426L379.5 278.5" stroke-dasharray="4.45 1.24" stroke-dashoffset="2.8"/><path d="M713.5 430L713.5 431.75C713.5 432.72 712.72 433.5 711.75 433.5L681.9 433.5C681.1 433.5 681.3 430.5 679.5 430.5L676.3 430.5C674.5 430.5 674.7 433.5 673.9 433.5L571.9 433.5C571.1 433.5 571.3 430.5 569.5 430.5L566.3 430.5C564.5 430.5 564.7 433.5 563.9 433.5L448.9 433.5C448.1 433.5 448.3 430.5 446.5 430.5L443.3 430.5C441.5 430.5 441.7 433.5 440.9 433.5L385.7 433.5C382.28 433.5 379.5 430.72 379.5 427.3L379.5 278.5" stroke-dasharray="4.45 1.24"/><path d="M463 185.5L467.25 185.5C469.6 185.5 471.5 187.4 471.5 189.75L471.5 264.2C471.5 266.57 473.43 268.5 475.8 268.5L653.9 268.5C654.7 268.5 654.5 265.5 656.3 265.5L659.5 265.5C661.3 265.5 661.1 268.5 661.9 268.5L839.2 268.5C841.57 268.5 843.5 266.57 843.5 264.2L843.5 179.8C843.5 177.43 841.57 175.5 839.2 175.5L803.8 175.5C801.43 175.5 799.5 177.43 799.5 179.8L799.5 211.2C799.5 213.57 797.57 215.5 795.2 215.5L745.5 215.5"/><path d="M1064 317.5L1025.9 317.5C1025.1 317.5 1025.3 314.5 1023.5 314.5L1020.3 314.5C1018.5 314.5 1018.7 317.5 1017.9 317.5L998.9 317.5C998.1 317.5 998.3 314.5 996.5 314.5L993.3 314.5C991.5 314.5 991.7 317.5 990.9 317.5L847.8 317.5C845.43 317.5 843.5 315.57 843.5 313.2L843.5 219.8C843.5 217.43 841.57 215.5 839.2 215.5L745.5 215.5"/><path d="M387 492.5L440.9 492.5C441.7 492.5 441.5 489.5 443.3 489.5L446.5 489.5C448.3 489.5 448.1 492.5 448.9 492.5L563.9 492.5C564.7 492.5 564.5 489.5 566.3 489.5L569.5 489.5C571.3 489.5 571.1 492.5 571.9 492.5L673.9 492.5C674.7 492.5 674.5 489.5 676.3 489.5L679.5 489.5C681.3 489.5 681.1 492.5 681.9 492.5L795.9 492.5C796.7 492.5 796.5 489.5 798.3 489.5L801.5 489.5C803.3 489.5 803.1 492.5 803.9 492.5L988.3 492.5C991.72 492.5 994.5 489.72 994.5 486.3L994.5 144.7C994.5 141.28 991.72 138.5 988.3 138.5L745.5 138.5" stroke-dasharray="4.45 1.24"/><path d="M677.5 430L677.5 559.3C677.5 562.72 680.28 565.5 683.7 565.5L795.9 565.5C796.7 565.5 796.5 562.5 798.3 562.5L801.5 562.5C803.3 562.5 803.1 565.5 803.9 565.5L1015.3 565.5C1018.72 565.5 1021.5 562.72 1021.5 559.3L1021.5 246.7C1021.5 243.28 1018.72 240.5 1015.3 240.5L998.9 240.5C998.1 240.5 998.3 237.5 996.5 237.5L993.3 237.5C991.5 237.5 991.7 240.5 990.9 240.5L847.9 240.5C847.1 240.5 847.3 237.5 845.5 237.5L842.3 237.5C840.5 237.5 840.7 240.5 839.9 240.5L782.7 240.5C779.28 240.5 776.5 237.72 776.5 234.3L776.5 218.7C776.5 216.93 775.07 215.5 773.3 215.5L745.5 215.5" stroke-dasharray="4.45 1.24"/><path d="M1073 307.5L1025.9 307.5C1025.1 307.5 1025.3 304.5 1023.5 304.5L1020.3 304.5C1018.5 304.5 1018.7 307.5 1017.9 307.5L998.9 307.5C998.1 307.5 998.3 304.5 996.5 304.5L993.3 304.5C991.5 304.5 991.7 307.5 990.9 307.5L847.9 307.5C847.1 307.5 847.3 304.5 845.5 304.5L842.3 304.5C840.5 304.5 840.7 307.5 839.9 307.5L663.7 307.5C660.28 307.5 657.5 304.72 657.5 301.3L657.5 215.5" stroke-dasharray="4.45 1.24"/><path d="M799.5 430L799.5 609.3C799.5 612.72 802.28 615.5 805.7 615.5L1142.3 615.5C1145.72 615.5 1148.5 612.72 1148.5 609.3L1148.5 356.5" stroke-dasharray="4.45 1.24"/><path d="M554 389.5L450.7 389.5C447.28 389.5 444.5 392.28 444.5 395.7L444.5 695.5" stroke-dasharray="4.45 1.24"/><path d="M567.5 430L567.5 839.3C567.5 842.72 570.28 845.5 573.7 845.5L665.5 845.5" stroke-dasharray="4.45 1.24"/></g><path d="M379.5 427V284.5" stroke="#c8c8c8" stroke-opacity="0.7"/><g stroke="#c8c8c8" stroke-opacity="0.74"><path d="M337.05 283.7L333.5 277.6L329.95 283.7"/><path d="M383.05 283.7L379.5 277.6L375.95 283.7"/><path d="M383.05 283.7L379.5 277.6L375.95 283.7"/><path d="M750.3 211.95L744.2 215.5L750.3 219.05"/><path d="M750.3 211.95L744.2 215.5L750.3 219.05"/><path d="M750.3 211.95L744.2 215.5L750.3 219.05"/><path d="M750.3 134.95L744.2 138.5L750.3 142.05"/><path d="M661.05 220.7L657.5 214.6L653.95 220.7"/><path d="M1152.05 361.7L1148.5 355.6L1144.95 361.7"/><path d="M440.95 690.4L444.5 696.5L448.05 690.4"/><path d="M659.6 849.05L665.7 845.5L659.6 841.95"/></g><path d="M333.5 416.9L337.1 421.6L333.5 426.3L329.9 421.6ZM454.1 185.7L458.8 182.1L463.5 185.7L458.8 189.3ZM1063.7 317.6L1068.4 314L1073.1 317.6L1068.4 321.2Z" fill="#c4c4c4" stroke="none"/><path d="M780.5 660L780.5 610.8C780.5 608.43 778.57 606.5 776.2 606.5L571.9 606.5C571.1 606.5 571.3 603.5 569.5 603.5L566.3 603.5C564.5 603.5 564.7 606.5 563.9 606.5L448.9 606.5C448.1 606.5 448.3 603.5 446.5 603.5L443.3 603.5C441.5 603.5 441.7 606.5 440.9 606.5L277.8 606.5C275.43 606.5 273.5 604.57 273.5 602.2L273.5 566" stroke="#4c8cdc"/><path d="M273.5 558L277.8 566.6H269.2Z" fill="#5297ec" stroke="none"/></svg>
<span class="t p" style="left:333.27px;top:121.55px;letter-spacing:0.01px">flag</span>
<span class="t o" style="left:437.86px;top:121.55px;letter-spacing:-0.01px">int</span>
<span class="t p" style="left:333.39px;top:138.55px">T</span>
<span class="t o" style="left:414.29px;top:138.55px;letter-spacing:0.2px">boolean</span>
<span class="t p" style="left:333px;top:155.55px;letter-spacing:0.14px">orderNum</span>
<span class="t o" style="left:437.86px;top:155.55px;letter-spacing:-0.01px">int</span>
<span class="t p" style="left:333px;top:173.55px;letter-spacing:0.14px">orderNum</span>
<span class="t o" style="left:437.86px;top:173.55px;letter-spacing:-0.01px">int</span>
<span class="t p" style="left:332.79px;top:190.55px;letter-spacing:0.21px">price</span>
<span class="t o" style="left:437.86px;top:190.55px;letter-spacing:-0.01px">int</span>
<span class="t p" style="left:333.27px;top:207.55px;letter-spacing:0.01px">flag</span>
<span class="t o" style="left:437.86px;top:207.55px;letter-spacing:-0.01px">int</span>
<span class="t p" style="left:333.39px;top:224.55px">T</span>
<span class="t o" style="left:414.29px;top:224.55px;letter-spacing:0.2px">boolean</span>
<span class="t b" style="left:332.62px;top:242.55px;letter-spacing:-0.01px">Record</span>
<span class="t g" style="left:364.41px;top:242.55px">(</span>
<span class="t g" style="left:368.02px;top:242.55px;letter-spacing:0.03px">Dish</span>
<span class="t g" style="left:387.85px;top:242.55px">,</span>
<span class="t o" style="left:393.86px;top:242.55px;letter-spacing:-0.16px">int</span>
<span class="t g" style="left:405.65px;top:242.55px">,</span>
<span class="t o" style="left:411.76px;top:242.55px;letter-spacing:-0.11px">int</span>
<span class="t g" style="left:422.65px;top:242.55px">,</span>
<span class="t o" style="left:429.66px;top:242.55px;letter-spacing:-0.01px">int</span>
<span class="t g" style="left:441.44px;top:242.55px">)</span>
<span class="t b" style="left:332.62px;top:259.55px;letter-spacing:-0.01px">Record</span>
<span class="t g" style="left:364.41px;top:259.55px;letter-spacing:0.55px">()</span>
<span class="tt" style="left:371px;top:98px;letter-spacing:-0.19px">Record</span>
<span class="t p" style="left:664.49px;top:57.55px">T</span>
<span class="t o" style="left:705.09px;top:57.55px;letter-spacing:0.24px">boolean</span>
<span class="t p" style="left:663.87px;top:74.55px;letter-spacing:-0.24px">name</span>
<span class="t g" style="left:713.87px;top:74.55px;letter-spacing:-0.07px">String</span>
<span class="t p" style="left:663.88px;top:91.55px;letter-spacing:-0.11px">unit_price</span>
<span class="t o" style="left:728.86px;top:91.55px;letter-spacing:-0.16px">int</span>
<span class="t p" style="left:663.87px;top:109.55px;letter-spacing:-0.24px">name</span>
<span class="t g" style="left:713.87px;top:109.55px;letter-spacing:-0.07px">String</span>
<span class="t p" style="left:664.49px;top:126.55px">T</span>
<span class="t o" style="left:705.09px;top:126.55px;letter-spacing:0.24px">boolean</span>
<span class="t p" style="left:663.88px;top:143.55px;letter-spacing:-0.11px">unit_price</span>
<span class="t o" style="left:728.86px;top:143.55px;letter-spacing:-0.16px">int</span>
<span class="t b" style="left:663.9px;top:161.55px;letter-spacing:-0.02px">getPrice</span>
<span class="t g" style="left:700.41px;top:161.55px">(</span>
<span class="t o" style="left:703.96px;top:161.55px;letter-spacing:-0.11px">int</span>
<span class="t g" style="left:716.14px;top:161.55px">)</span>
<span class="t o" style="left:728.86px;top:161.55px;letter-spacing:-0.16px">int</span>
<span class="t b" style="left:663.72px;top:179.55px;letter-spacing:0.1px">Dish</span>
<span class="t g" style="left:684.41px;top:179.55px">(</span>
<span class="t g" style="left:688.07px;top:179.55px;letter-spacing:-0.11px">String</span>
<span class="t g" style="left:714.55px;top:179.55px">,</span>
<span class="t o" style="left:720.76px;top:179.55px;letter-spacing:-0.21px">int</span>
<span class="t g" style="left:732.24px;top:179.55px">)</span>
<span class="t b" style="left:663.72px;top:196.55px;letter-spacing:0.1px">Dish</span>
<span class="t g" style="left:684.41px;top:196.55px;letter-spacing:0.65px">()</span>
<span class="tt" style="left:690px;top:34px;letter-spacing:-0.17px">Dish</span>
<span class="t b" style="left:1100.9px;top:285.55px;letter-spacing:0.23px">addDish</span>
<span class="t g" style="left:1138.51px;top:285.55px">(</span>
<span class="t g" style="left:1142.07px;top:285.55px;letter-spacing:-0.05px">String</span>
<span class="t g" style="left:1167.85px;top:285.55px">,</span>
<span class="t o" style="left:1173.96px;top:285.55px;letter-spacing:-0.06px">int</span>
<span class="t g" style="left:1186.44px;top:285.55px">)</span>
<span class="t o" style="left:1200.47px;top:285.55px;letter-spacing:0.31px">void</span>
<span class="t b" style="left:1101.04px;top:302.55px;letter-spacing:-0.06px">searchDish</span>
<span class="t g" style="left:1151.31px;top:302.55px">(</span>
<span class="t g" style="left:1155.17px;top:302.55px;letter-spacing:-0.07px">String</span>
<span class="t g" style="left:1181.64px;top:302.55px">)</span>
<span class="t g" style="left:1199.72px;top:302.55px;letter-spacing:0.26px">Dish</span>
<span class="t b" style="left:1100.9px;top:319.55px;letter-spacing:-0.06px">getIsHaveIndex</span>
<span class="t g" style="left:1169.41px;top:319.55px">(</span>
<span class="t g" style="left:1173.07px;top:319.55px;letter-spacing:-0.07px">String</span>
<span class="t g" style="left:1199.14px;top:319.55px">)</span>
<span class="t o" style="left:1207.86px;top:319.55px;letter-spacing:-0.01px">int</span>
<span class="t b" style="left:1100.52px;top:337.55px;letter-spacing:0.05px">Menu</span>
<span class="t g" style="left:1125.21px;top:337.55px;letter-spacing:0.65px">()</span>
<span class="tt" style="left:1145.4px;top:262px;letter-spacing:-0.07px">Menu</span>
<span class="t b" style="left:581.57px;top:376.55px;letter-spacing:0.05px">main</span>
<span class="t g" style="left:604.61px;top:376.55px">(</span>
<span class="t g" style="left:608.27px;top:376.55px;letter-spacing:-0.19px">String</span>
<span class="t g" style="left:634.12px;top:376.55px;letter-spacing:0.38px">[]</span>
<span class="t g" style="left:642.04px;top:376.55px">)</span>
<span class="t o" style="left:804.77px;top:376.55px;letter-spacing:0.17px">void</span>
<span class="t b" style="left:582.06px;top:393.55px;letter-spacing:0.01px">tableIsExist</span>
<span class="t g" style="left:633.31px;top:393.55px">(</span>
<span class="t o" style="left:636.76px;top:393.55px;letter-spacing:-0.01px">int</span>
<span class="t g" style="left:648.15px;top:393.55px">,</span>
<span class="t g" style="left:654.72px;top:393.55px;letter-spacing:0.04px">LocalDateTime</span>
<span class="t g" style="left:719.85px;top:393.55px">,</span>
<span class="t g" style="left:726.28px;top:393.55px;letter-spacing:-0.15px">ArrayList</span>
<span class="t g" style="left:765.53px;top:393.55px">&lt;</span>
<span class="t g" style="left:772.19px;top:393.55px;letter-spacing:-0.08px">Table</span>
<span class="t g" style="left:796.53px;top:393.55px">&gt;</span>
<span class="t g" style="left:803.04px;top:393.55px">)</span>
<span class="t o" style="left:811.86px;top:393.55px;letter-spacing:0.14px">int</span>
<span class="t b" style="left:581.42px;top:411.55px;letter-spacing:0.1px">Main</span>
<span class="t g" style="left:604.31px;top:411.55px;letter-spacing:0.75px">()</span>
<span class="tt" style="left:689.3px;top:353px;letter-spacing:0.02px">Main</span>
<span class="t p" style="left:187.26px;top:452.55px;letter-spacing:0.28px">total</span>
<span class="t o" style="left:371.06px;top:452.55px;letter-spacing:-0.06px">int</span>
<span class="t b" style="left:187px;top:470.55px;letter-spacing:-0.03px">delARecordByOrderNum</span>
<span class="t g" style="left:293.21px;top:470.55px">(</span>
<span class="t o" style="left:297.16px;top:470.55px;letter-spacing:-0.21px">int</span>
<span class="t g" style="left:309.24px;top:470.55px">)</span>
<span class="t o" style="left:363.77px;top:470.55px;letter-spacing:0.21px">void</span>
<span class="t b" style="left:187.27px;top:487.55px;letter-spacing:0.01px">findRecordByNum</span>
<span class="t g" style="left:267.21px;top:487.55px">(</span>
<span class="t o" style="left:271.16px;top:487.55px;letter-spacing:-0.06px">int</span>
<span class="t g" style="left:282.54px;top:487.55px">)</span>
<span class="t o" style="left:371.06px;top:487.55px;letter-spacing:-0.06px">int</span>
<span class="t b" style="left:187px;top:504.55px;letter-spacing:0.08px">getTotalPrice</span>
<span class="t g" style="left:246.61px;top:504.55px">(</span>
<span class="t o" style="left:250.47px;top:504.55px;letter-spacing:0.06px">float</span>
<span class="t g" style="left:269.94px;top:504.55px">)</span>
<span class="t o" style="left:371.06px;top:504.55px;letter-spacing:-0.06px">int</span>
<span class="t b" style="left:187px;top:521.55px;letter-spacing:0.06px">addARecord</span>
<span class="t g" style="left:242.01px;top:521.55px">(</span>
<span class="t o" style="left:245.16px;top:521.55px;letter-spacing:-0.21px">int</span>
<span class="t g" style="left:255.95px;top:521.55px">,</span>
<span class="t g" style="left:263.07px;top:521.55px;letter-spacing:-0.05px">String</span>
<span class="t g" style="left:288.85px;top:521.55px">,</span>
<span class="t o" style="left:294.96px;top:521.55px;letter-spacing:-0.06px">int</span>
<span class="t g" style="left:305.85px;top:521.55px">,</span>
<span class="t o" style="left:312.96px;top:521.55px;letter-spacing:-0.21px">int</span>
<span class="t g" style="left:323.55px;top:521.55px">,</span>
<span class="t g" style="left:329.72px;top:521.55px;letter-spacing:0.02px">Menu</span>
<span class="t g" style="left:354.34px;top:521.55px">)</span>
<span class="t o" style="left:363.77px;top:521.55px;letter-spacing:0.21px">void</span>
<span class="t b" style="left:186.95px;top:539.55px;letter-spacing:-0.14px">Order</span>
<span class="t g" style="left:212.71px;top:539.55px;letter-spacing:0.15px">()</span>
<span class="tt" style="left:269.72px;top:429px;letter-spacing:-0.33px">Order</span>
<span class="t b" style="left:383.42px;top:722.55px;letter-spacing:0.07px">DeleteCompare</span>
<span class="t g" style="left:452.41px;top:722.55px">(</span>
<span class="t g" style="left:455.87px;top:722.55px;letter-spacing:-0.01px">String</span>
<span class="t g" style="left:482.44px;top:722.55px">)</span>
<span class="t o" style="left:493.99px;top:722.55px;letter-spacing:0.3px">boolean</span>
<span class="t b" style="left:383.42px;top:739.55px;letter-spacing:0.14px">RecordCompare</span>
<span class="t g" style="left:455.41px;top:739.55px">(</span>
<span class="t g" style="left:459.17px;top:739.55px;letter-spacing:-0.07px">String</span>
<span class="t g" style="left:485.34px;top:739.55px">)</span>
<span class="t o" style="left:493.99px;top:739.55px;letter-spacing:0.3px">boolean</span>
<span class="t b" style="left:383.99px;top:756.55px;letter-spacing:0.1px">TableCompare</span>
<span class="t g" style="left:448.41px;top:756.55px">(</span>
<span class="t g" style="left:452.17px;top:756.55px;letter-spacing:-0.07px">String</span>
<span class="t g" style="left:478.54px;top:756.55px">)</span>
<span class="t o" style="left:493.99px;top:756.55px;letter-spacing:0.3px">boolean</span>
<span class="t b" style="left:383.56px;top:774.55px;letter-spacing:0.01px">isNum</span>
<span class="t g" style="left:412.31px;top:774.55px">(</span>
<span class="t g" style="left:415.87px;top:774.55px;letter-spacing:0.03px">String</span>
<span class="t g" style="left:442.44px;top:774.55px">)</span>
<span class="t o" style="left:493.99px;top:774.55px;letter-spacing:0.3px">boolean</span>
<span class="t b" style="left:383.42px;top:791.55px;letter-spacing:0.12px">DishCompare</span>
<span class="t g" style="left:444.11px;top:791.55px">(</span>
<span class="t g" style="left:447.97px;top:791.55px;letter-spacing:-0.01px">String</span>
<span class="t g" style="left:474.34px;top:791.55px">)</span>
<span class="t o" style="left:493.99px;top:791.55px;letter-spacing:0.3px">boolean</span>
<span class="t b" style="left:383.42px;top:808.55px;letter-spacing:0.05px">PayForCompare</span>
<span class="t g" style="left:455.41px;top:808.55px">(</span>
<span class="t g" style="left:459.17px;top:808.55px;letter-spacing:-0.07px">String</span>
<span class="t g" style="left:485.34px;top:808.55px">)</span>
<span class="t o" style="left:493.99px;top:808.55px;letter-spacing:0.3px">boolean</span>
<span class="t b" style="left:383.77px;top:825.55px;letter-spacing:0.04px">SpecialDish</span>
<span class="t g" style="left:436.61px;top:825.55px">(</span>
<span class="t g" style="left:440.07px;top:825.55px;letter-spacing:-0.07px">String</span>
<span class="t g" style="left:466.44px;top:825.55px">)</span>
<span class="t o" style="left:493.99px;top:825.55px;letter-spacing:0.3px">boolean</span>
<span class="t b" style="left:383.56px;top:843.55px;letter-spacing:0.15px">inputCompare</span>
<span class="t g" style="left:447.11px;top:843.55px;letter-spacing:-0.05px">()</span>
<span class="tt" style="left:418.18px;top:699px;letter-spacing:0.08px">inputCompare</span>
<span class="t p" style="left:694.59px;top:686.55px;letter-spacing:-0.04px">TableNum</span>
<span class="t o" style="left:879.76px;top:686.55px;letter-spacing:-0.01px">int</span>
<span class="t p" style="left:694.59px;top:703.55px;letter-spacing:-0.04px">TableTime</span>
<span class="t g" style="left:864.97px;top:703.55px;letter-spacing:-0.05px">String</span>
<span class="t p" style="left:694.59px;top:720.55px;letter-spacing:-0.02px">TableDate</span>
<span class="t g" style="left:864.97px;top:720.55px;letter-spacing:-0.05px">String</span>
<span class="t p" style="left:694.59px;top:738.55px;letter-spacing:-0.04px">TableNum</span>
<span class="t o" style="left:879.76px;top:738.55px;letter-spacing:-0.01px">int</span>
<span class="t p" style="left:694.59px;top:755.55px;letter-spacing:-0.04px">TableTime</span>
<span class="t g" style="left:864.97px;top:755.55px;letter-spacing:-0.05px">String</span>
<span class="t p" style="left:694.59px;top:772.55px;letter-spacing:-0.02px">TableDate</span>
<span class="t g" style="left:864.97px;top:772.55px;letter-spacing:-0.05px">String</span>
<span class="t b" style="left:693.7px;top:790.55px;letter-spacing:0.05px">dateHandleTheDiscount</span>
<span class="t g" style="left:800.21px;top:790.55px">(</span>
<span class="t g" style="left:803.87px;top:790.55px;letter-spacing:-0.07px">String</span>
<span class="t g" style="left:830.65px;top:790.55px">,</span>
<span class="t g" style="left:836.97px;top:790.55px;letter-spacing:-0.03px">String</span>
<span class="t g" style="left:863.24px;top:790.55px">)</span>
<span class="t o" style="left:872.57px;top:790.55px;letter-spacing:0.06px">float</span>
<span class="t b" style="left:693.46px;top:807.55px;letter-spacing:-0.08px">isSameTime</span>
<span class="t g" style="left:747.11px;top:807.55px">(</span>
<span class="t g" style="left:750.62px;top:807.55px;letter-spacing:0.06px">LocalDateTime</span>
<span class="t g" style="left:816.64px;top:807.55px">)</span>
<span class="t o" style="left:856.29px;top:807.55px;letter-spacing:0.27px">boolean</span>
<span class="t b" style="left:694.49px;top:825.55px;letter-spacing:-0.06px">Table</span>
<span class="t g" style="left:718.51px;top:825.55px;letter-spacing:0.35px">()</span>
<span class="t b" style="left:694.49px;top:842.55px;letter-spacing:-0.06px">Table</span>
<span class="t g" style="left:718.51px;top:842.55px">(</span>
<span class="t o" style="left:722.16px;top:842.55px;letter-spacing:-0.26px">int</span>
<span class="t g" style="left:733.65px;top:842.55px">,</span>
<span class="t g" style="left:739.97px;top:842.55px;letter-spacing:-0.13px">String</span>
<span class="t g" style="left:765.65px;top:842.55px">,</span>
<span class="t g" style="left:771.87px;top:842.55px;letter-spacing:-0.03px">String</span>
<span class="t g" style="left:799.44px;top:842.55px">)</span>
<span class="tt" style="left:777.93px;top:663px;letter-spacing:-0.28px">Table</span>
<span class="cr" style="left:363.1px;top:324.7px">«create»</span>
<span class="cr" style="left:862.9px;top:127.6px;letter-spacing:0.01px">«create»</span>
<span class="cr" style="left:903.7px;top:236.2px;letter-spacing:-0.16px">«create»</span>
<span class="cr" style="left:759.5px;top:322px;letter-spacing:-0.07px">«create»</span>
<span class="cr" style="left:530.5px;top:422.7px;letter-spacing:-0.11px">«create»</span>
<span class="cr" style="left:411.7px;top:533.8px;letter-spacing:-0.19px">«create»</span>
<span class="cr" style="left:1115.1px;top:586.1px;letter-spacing:-0.04px">«create»</span>
<span class="cr" style="left:590.4px;top:848.9px;letter-spacing:-0.03px">«create»</span>
<div class="gl"><span class="lb" style="left:334.15px;top:310.5px;letter-spacing:-0.1px">orderList</span>
<span class="lb" style="left:750.1px;top:199.6px;letter-spacing:0.1px">dish</span>
<span class="lb" style="left:904.35px;top:249.8px;letter-spacing:0.1px">dish</span>
<span class="lb" style="left:326.33px;top:409.4px">1</span>
<span class="lb" style="left:320.15px;top:355.4px;color:#dadada">*</span>
<span class="lb" style="left:458.33px;top:175.3px">1</span>
<span class="lb" style="left:833.33px;top:215.8px">1</span>
<span class="lb" style="left:848.45px;top:260.4px;color:#dadada">*</span>
<span class="lb" style="left:1044.63px;top:314.9px">1</span></div>
</body></html>
